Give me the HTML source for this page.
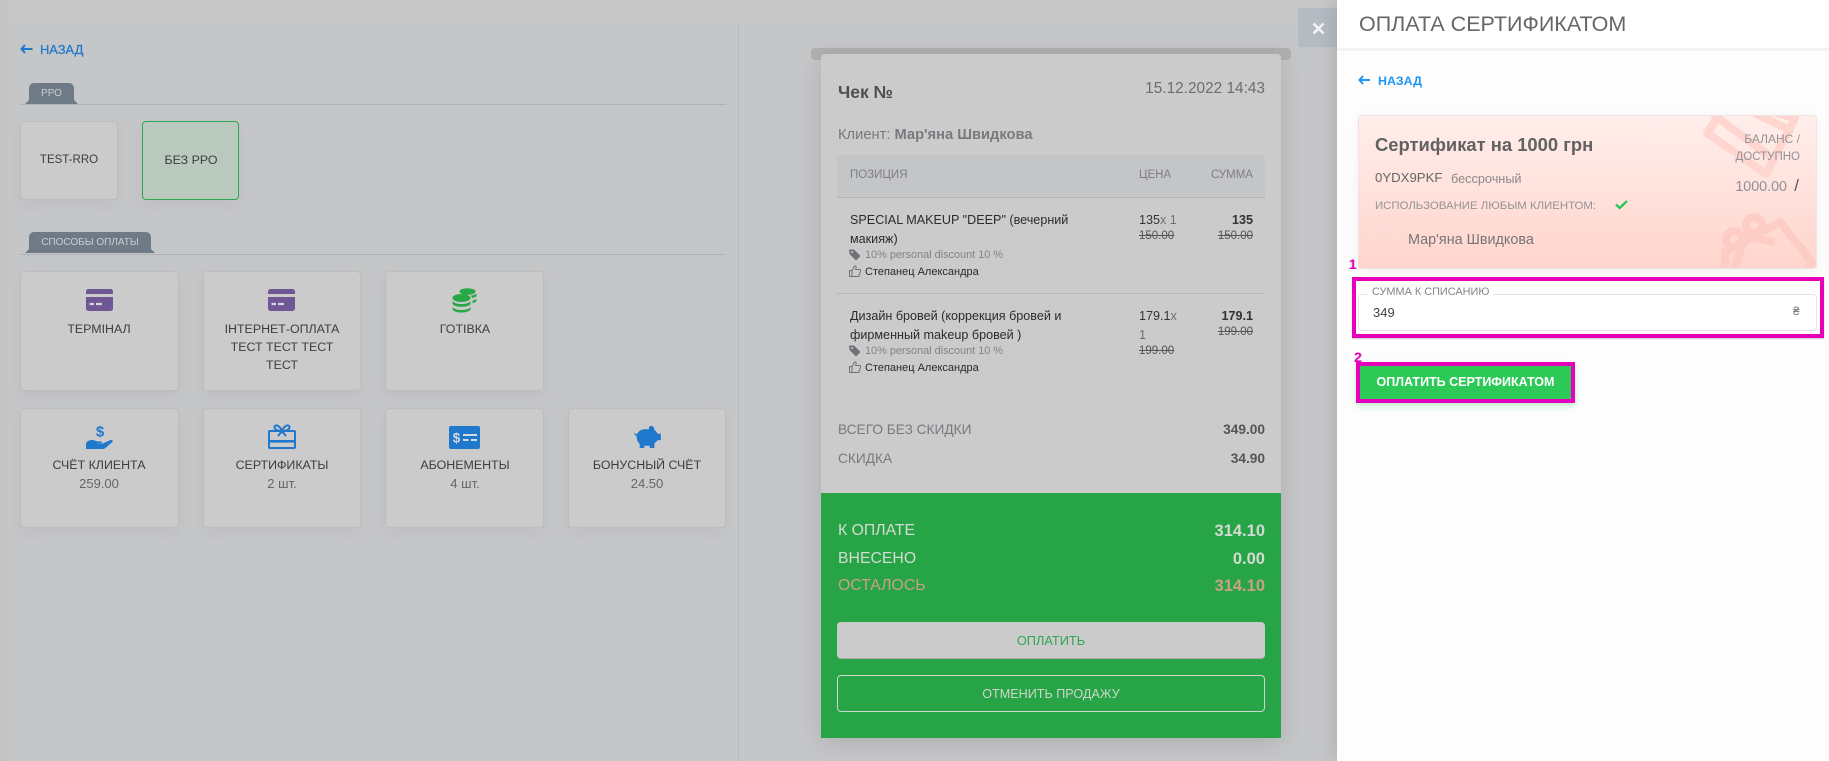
<!DOCTYPE html>
<html lang="ru"><head><meta charset="utf-8"><title>Оплата сертификатом</title>
<style>
*{box-sizing:border-box}
html,body{margin:0;padding:0}
body{width:1829px;height:761px;position:relative;overflow:hidden;background:#c7c7c7;font-family:"Liberation Sans",Arial,sans-serif;color:#333}
.a{position:absolute}
.t{position:absolute;white-space:nowrap;line-height:20px;height:20px}
.r{transform:translateX(-100%)}
.c{transform:translateX(-50%)}
.b{font-weight:bold}
.tab{position:absolute;background:#6e7b87;border-radius:5px 5px 0 0;color:#c9cdd1;font-size:10px;text-align:center;height:21px;line-height:22px}
.tab:before,.tab:after{content:"";position:absolute;bottom:0;width:5px;height:5px;background:#6e7b87}
.tab:before{left:-4px;clip-path:polygon(100% 0,100% 100%,0 100%)}
.tab:after{right:-4px;clip-path:polygon(0 0,100% 100%,0 100%)}
.card{position:absolute;background:#cbcbcb;border:1px solid #bcbdbe;border-radius:4px;box-shadow:0 5px 14px rgba(0,0,0,.04)}
.lb{font-size:12.4px;color:#3d3d3d}
.sub{font-size:13px;color:#666}
.hd{font-size:11.5px;color:#7d7f82}
.p{font-size:12.6px;color:#2c2c2c}
.d{font-size:10.9px;color:#80838a}
.s{font-size:11px;color:#2a2a2a}
.n{font-size:12.6px;color:#333}
.st,.st span{font-size:11.5px;color:#555;text-decoration:line-through}
.tot{font-size:13.7px;color:#76797e}
.g{font-size:15.8px;color:#d4dbd4}
.gb{font-size:16.5px}
</style></head><body>

<!-- page background -->
<div class="a" style="left:8px;top:24px;width:1340px;height:737px;background:#c5c6c8"></div>
<div class="a" style="left:0;top:0;width:8px;height:761px;background:#c3c3c3"></div>
<div class="a" style="left:738px;top:24px;width:1px;height:737px;background:#b9babc"></div>

<!-- left column -->
<svg class="a" style="left:20px;top:44px" width="13" height="10" viewBox="0 0 13 10"><path d="M5 1 1.500 5 5 9M2 5h10.500" fill="none" stroke="#1f78cc" stroke-width="2"/></svg>
<div class="t" style="left:40px;top:40px;font-size:12.900px;color:#1f78cc;-webkit-text-stroke:.25px #1f78cc">НАЗАД</div>

<div class="tab" style="left:29px;top:83px;width:45px">РРО</div>
<div class="a" style="left:20px;top:104px;width:706px;height:1px;background:#b0b2b5"></div>
<div class="card" style="left:20px;top:121px;width:98px;height:79px"></div>
<div class="t lb" style="left:69px;top:150px;font-size:11.500px"><span class="c" style="position:absolute">TEST-RRO</span></div>
<div class="card" style="left:142px;top:121px;width:97px;height:79px;background:#bac9bd;border-color:#32a552"></div>
<div class="t lb" style="left:191px;top:150px"><span class="c" style="position:absolute">БЕЗ РРО</span></div>

<div class="tab" style="left:29px;top:232px;width:122px">СПОСОБЫ ОПЛАТЫ</div>
<div class="a" style="left:20px;top:254px;width:706px;height:1px;background:#b0b2b5"></div>

<div class="card" style="left:20px;top:271px;width:159px;height:120px"></div>
<div class="card" style="left:203px;top:271px;width:158px;height:120px"></div>
<div class="card" style="left:385px;top:271px;width:159px;height:120px"></div>
<div class="card" style="left:20px;top:408px;width:159px;height:120px"></div>
<div class="card" style="left:203px;top:408px;width:158px;height:120px"></div>
<div class="card" style="left:385px;top:408px;width:159px;height:120px"></div>
<div class="card" style="left:568px;top:408px;width:158px;height:120px"></div>

<!-- credit card icons -->
<svg class="a" style="left:86px;top:289px" width="27" height="22" viewBox="0 0 27 22"><path d="M2.500 0h22A2.500 2.500 0 0 1 27 2.500V5H0V2.500A2.500 2.500 0 0 1 2.500 0ZM0 8h27v11.500a2.500 2.500 0 0 1-2.500 2.500h-22A2.500 2.500 0 0 1 0 19.500Z" fill="#6f5796"/><path d="M3.500 15h4.500M10 15h6" stroke="#d8d4df" stroke-width="2.200"/></svg>
<svg class="a" style="left:268px;top:289px" width="27" height="22" viewBox="0 0 27 22"><path d="M2.500 0h22A2.500 2.500 0 0 1 27 2.500V5H0V2.500A2.500 2.500 0 0 1 2.500 0ZM0 8h27v11.500a2.500 2.500 0 0 1-2.500 2.500h-22A2.500 2.500 0 0 1 0 19.500Z" fill="#6f5796"/><path d="M3.500 15h4.500M10 15h6" stroke="#d8d4df" stroke-width="2.200"/></svg>

<!-- coins -->
<svg class="a" style="left:452px;top:288px" width="26" height="25" viewBox="0 0 26 25"><g fill="#28a745"><ellipse cx="15.500" cy="3.500" rx="8" ry="3.300"/><path d="M19 7.500c2.500-.3 4.500-1 5.500-2v2.500c-.6 1-2.400 1.800-4.500 2.100ZM20.500 12.500c2-.3 3.300-1 4-2v2.500c-.7 1-2 1.700-4 2Z"/><ellipse cx="9.500" cy="10" rx="9" ry="4"/><path d="M.5 13c1.500 2 5 3 9 3s7.500-1 9-3v3c-1.500 2-5 2.800-9 2.800s-7.500-.8-9-2.800ZM.5 19c1.500 2 5 3 9 3s7.500-1 9-3v2.500c-1.500 2-5 3-9 3s-7.500-1-9-3Z"/></g></svg>

<!-- hand -->
<svg class="a" style="left:86px;top:424px" width="27" height="26" viewBox="0 0 27 26"><text x="14" y="12.500" text-anchor="middle" font-family="Liberation Sans" font-weight="bold" font-size="15" fill="#1f78cc">$</text><path d="M0 19c2-2.500 4-3 6-3 2.500 0 4 1.500 6.500 1.500h2.500c1.500 0 1.500 2-.5 2.200H10c2 .5 4.500.6 6.500-.2L24.500 16c1.500-.6 3 .8 1.800 2l-6.800 6c-1 .8-2 1-3.500 1H0Z" fill="#1f78cc"/></svg>

<!-- gift -->
<svg class="a" style="left:268px;top:424px" width="28" height="26" viewBox="0 0 28 26"><path d="M2 7h24a1 1 0 0 1 1 1v15a1 1 0 0 1-1 1H2a1 1 0 0 1-1-1V8a1 1 0 0 1 1-1Z" fill="none" stroke="#1f78cc" stroke-width="2"/><rect x="1" y="16" width="26" height="2.600" fill="#1f78cc"/><path d="M14 7C12 2 8.500.5 7 2S7 7 14 7C21 7 22.500 3.500 21 2S16 2 14 7ZM14 7l-4 5M14 7l4 5" fill="none" stroke="#1f78cc" stroke-width="2"/></svg>

<!-- abonement -->
<svg class="a" style="left:449px;top:426px" width="31" height="23" viewBox="0 0 31 23"><rect width="31" height="23" rx="2" fill="#1f78cc"/><text x="7.500" y="16.500" text-anchor="middle" font-family="Liberation Sans" font-weight="bold" font-size="13.500" fill="#d4dbe2">$</text><path d="M14 9h14M14 14h5.500M22 14h6" stroke="#d4dbe2" stroke-width="2"/></svg>

<!-- piggy -->
<svg class="a" style="left:634px;top:425px" width="27" height="23" viewBox="0 0 29 25"><path d="M18 1c3 0 4 2 4 4.500 1.600 1 2.800 2.400 3.500 4H29v7h-3.500c-.8 1.400-2 2.600-3.500 3.500V25h-5v-2.500h-6V25H6v-4.500C3.500 18.500 2.500 15.500 2.800 12 1 11.500 0 10 .5 8c.4 1.200 1.300 2 2.700 2C4.500 6.500 8 4.500 12.500 4.500c1.200 0 2.300.1 3.300.4C16 3 16.800 1 18 1Z" fill="#1f78cc"/></svg>

<div class="t lb" style="left:99px;top:319px"><span class="c" style="position:absolute">ТЕРМІНАЛ</span></div>
<div class="t lb" style="left:282px;top:319px"><span class="c" style="position:absolute">ІНТЕРНЕТ-ОПЛАТА</span></div>
<div class="t lb" style="left:282px;top:337px"><span class="c" style="position:absolute">ТЕСТ ТЕСТ ТЕСТ</span></div>
<div class="t lb" style="left:282px;top:355px"><span class="c" style="position:absolute">ТЕСТ</span></div>
<div class="t lb" style="left:465px;top:319px"><span class="c" style="position:absolute">ГОТІВКА</span></div>
<div class="t lb" style="left:99px;top:455px"><span class="c" style="position:absolute">СЧЁТ КЛИЕНТА</span></div>
<div class="t sub" style="left:99px;top:474px"><span class="c" style="position:absolute">259.00</span></div>
<div class="t lb" style="left:282px;top:455px"><span class="c" style="position:absolute">СЕРТИФИКАТЫ</span></div>
<div class="t sub" style="left:282px;top:474px"><span class="c" style="position:absolute">2 шт.</span></div>
<div class="t lb" style="left:465px;top:455px"><span class="c" style="position:absolute">АБОНЕМЕНТЫ</span></div>
<div class="t sub" style="left:465px;top:474px"><span class="c" style="position:absolute">4 шт.</span></div>
<div class="t lb" style="left:647px;top:455px"><span class="c" style="position:absolute">БОНУСНЫЙ СЧЁТ</span></div>
<div class="t sub" style="left:647px;top:474px"><span class="c" style="position:absolute">24.50</span></div>

<!-- receipt -->
<div class="a" style="left:811px;top:48px;width:480px;height:12px;background:#b0b0b0;border-radius:4px"></div>
<div class="a" style="left:821px;top:54px;width:460px;height:684px;background:#cbcbcb;border-radius:4px 4px 0 0;box-shadow:0 4px 24px rgba(0,0,0,.12)"></div>
<div class="a" style="left:821px;top:493px;width:460px;height:245px;background:#27a446"></div>

<div class="t b" style="left:838px;top:82px;font-size:17.500px;color:#4f4f4f">Чек №</div>
<div class="t" style="left:1265px;top:79px;font-size:15.400px;color:#6b6d70"><span class="r" style="position:absolute">15.12.2022 14:43</span></div>
<div class="t" style="left:838px;top:125px;font-size:14.700px;color:#777a7e">Клиент: <b>Мар'яна Швидкова</b></div>

<div class="a" style="left:837px;top:155px;width:428px;height:43px;background:#c4c5c7;border-bottom:1px solid #b4b6b8"></div>
<div class="t hd" style="left:850px;top:165px">ПОЗИЦИЯ</div>
<div class="t hd" style="left:1139px;top:165px">ЦЕНА</div>
<div class="t hd" style="left:1253px;top:165px"><span class="r" style="position:absolute">СУММА</span></div>

<div class="t p" style="left:850px;top:210px">SPECIAL MAKEUP "DEEP" (вечерний</div>
<div class="t p" style="left:850px;top:229px">макияж)</div>
<svg class="a" style="left:849px;top:249px" width="12" height="12" viewBox="0 0 12 12"><path d="M0 1.500A1 1 0 0 1 1 .5h4L11.500 7 7 11.500.5 5Z" fill="#6f7276"/><circle cx="3" cy="3" r="1" fill="#cbcbcb"/></svg>
<div class="t d" style="left:865px;top:245px">10% personal discount 10 %</div>
<svg class="a" style="left:849px;top:265px" width="12" height="12" viewBox="0 0 12 12"><path d="M.5 5.500h2.500v6H.5ZM3 5.500 5.500 1c1.200-.5 1.800.3 1.500 2L6.500 4.500h4c1 0 1.300.8 1 1.500l-1.200 4.500c-.3.700-.7 1-1.500 1H3" fill="none" stroke="#6f7276" stroke-width="1"/></svg>
<div class="t s" style="left:865px;top:262px">Степанец Александра</div>

<div class="t n" style="left:1139px;top:210px">135<span style="color:#6c6e71">x 1</span></div>
<div class="t st" style="left:1139px;top:226px">150.00</div>
<div class="t n b" style="left:1253px;top:210px"><span class="r" style="position:absolute">135</span></div>
<div class="t" style="left:1253px;top:226px"><span class="r st" style="position:absolute">150.00</span></div>

<div class="a" style="left:837px;top:293px;width:428px;height:1px;background:#b4b6b8"></div>

<div class="t p" style="left:850px;top:306px">Дизайн бровей (коррекция бровей и</div>
<div class="t p" style="left:850px;top:325px">фирменный makeup бровей )</div>
<svg class="a" style="left:849px;top:345px" width="12" height="12" viewBox="0 0 12 12"><path d="M0 1.500A1 1 0 0 1 1 .5h4L11.500 7 7 11.500.5 5Z" fill="#6f7276"/><circle cx="3" cy="3" r="1" fill="#cbcbcb"/></svg>
<div class="t d" style="left:865px;top:341px">10% personal discount 10 %</div>
<svg class="a" style="left:849px;top:361px" width="12" height="12" viewBox="0 0 12 12"><path d="M.5 5.500h2.500v6H.5ZM3 5.500 5.500 1c1.200-.5 1.800.3 1.500 2L6.500 4.500h4c1 0 1.300.8 1 1.500l-1.200 4.500c-.3.700-.7 1-1.500 1H3" fill="none" stroke="#6f7276" stroke-width="1"/></svg>
<div class="t s" style="left:865px;top:358px">Степанец Александра</div>

<div class="t n" style="left:1139px;top:306px">179.1<span style="color:#6c6e71">x</span></div>
<div class="t n" style="left:1139px;top:325px;color:#6c6e71">1</div>
<div class="t st" style="left:1139px;top:341px">199.00</div>
<div class="t n b" style="left:1253px;top:306px"><span class="r" style="position:absolute">179.1</span></div>
<div class="t" style="left:1253px;top:322px"><span class="r st" style="position:absolute">199.00</span></div>

<div class="t tot" style="left:838px;top:420px">ВСЕГО БЕЗ СКИДКИ</div>
<div class="t tot b" style="left:1265px;top:420px;color:#555"><span class="r" style="position:absolute">349.00</span></div>
<div class="t tot" style="left:838px;top:449px">СКИДКА</div>
<div class="t tot b" style="left:1265px;top:449px;color:#555"><span class="r" style="position:absolute">34.90</span></div>

<div class="t g" style="left:838px;top:521px">К ОПЛАТЕ</div>
<div class="t g gb b" style="left:1265px;top:521px"><span class="r" style="position:absolute">314.10</span></div>
<div class="t g" style="left:838px;top:549px">ВНЕСЕНО</div>
<div class="t g gb b" style="left:1265px;top:549px"><span class="r" style="position:absolute">0.00</span></div>
<div class="t g" style="left:838px;top:576px;color:#c9a088">ОСТАЛОСЬ</div>
<div class="t g gb b" style="left:1265px;top:576px;color:#c9a088"><span class="r" style="position:absolute">314.10</span></div>

<div class="a" style="left:837px;top:622px;width:428px;height:37px;background:#cbcbcb;border-radius:4px;border-bottom:1px solid #aaa;text-align:center;line-height:38px;font-size:12.800px;color:#2fa650">ОПЛАТИТЬ</div>
<div class="a" style="left:837px;top:675px;width:428px;height:37px;border:1px solid #cfd6cf;border-radius:4px;text-align:center;line-height:36px;font-size:12.600px;color:#cdd6cd">ОТМЕНИТЬ ПРОДАЖУ</div>

<!-- close button -->
<div class="a" style="left:1298px;top:8px;width:39px;height:39px;background:#b4bbc3;border-radius:3px 0 0 3px"></div>
<svg class="a" style="left:1312px;top:22px" width="13" height="13" viewBox="0 0 13 13"><path d="M1.500 1.500 11.500 11.500M11.500 1.500 1.500 11.500" stroke="#f4f4f4" stroke-width="2.600"/></svg>

<!-- right panel -->
<div class="a" style="left:1337px;top:0;width:492px;height:761px;background:#fdfdfd;box-shadow:-4px 0 16px rgba(0,0,0,.1)"></div>
<div class="a" style="left:1337px;top:0;width:492px;height:48px;background:#fff"></div>
<div class="a" style="left:1337px;top:48px;width:492px;height:3px;background:#f3f3f3"></div>
<div class="t" style="left:1359px;top:14px;font-size:21.500px;color:#646669">ОПЛАТА СЕРТИФИКАТОМ</div>

<svg class="a" style="left:1358px;top:75px" width="12" height="10" viewBox="0 0 12 10"><path d="M5 1 1.500 5 5 9M2 5h10" fill="none" stroke="#2196f3" stroke-width="2"/></svg>
<div class="t b" style="left:1378px;top:71px;font-size:12.400px;color:#2196f3">НАЗАД</div>

<!-- certificate card -->
<div class="a" style="left:1358px;top:115px;width:459px;height:154px;background:linear-gradient(#ffeeeb,#ffd5cd);border:1px solid #f0e2df;border-radius:4px;overflow:hidden;box-shadow:0 2px 12px rgba(0,0,0,.05)">
<svg class="a" style="left:0;top:0" width="459" height="154" viewBox="1359 116 459 154"><g fill="none" stroke="#ffd6cf" stroke-width="8" stroke-linejoin="round" stroke-linecap="round"><path d="M1707 133 1730 100 1795 118 1766 174Z"/><path d="M1744 108 1790 130M1714 115 1768 155"/></g><g fill="none" stroke="#fdcdc5" stroke-width="8" stroke-linejoin="round"><path d="M1725 275 1725 252 1780 222 1812 262 1800 285Z"/><circle cx="1734" cy="239" r="8"/><circle cx="1754" cy="225" r="8"/><path d="M1745 236 1775 242M1745 236 1735 268"/></g></svg>
</div>
<div class="t b" style="left:1375px;top:135px;font-size:18.400px;color:#626262">Сертификат на 1000 грн</div>
<div class="t" style="left:1375px;top:168px;font-size:13.200px;color:#666">0YDX9PKF</div>
<div class="t" style="left:1451px;top:169px;font-size:12.700px;color:#8a8a8a">бессрочный</div>
<div class="t" style="left:1375px;top:196px;font-size:11.400px;color:#949494">ИСПОЛЬЗОВАНИЕ ЛЮБЫМ КЛИЕНТОМ:</div>
<svg class="a" style="left:1615px;top:199px" width="13" height="11" viewBox="0 0 13 11"><path d="M1 5.500 4.700 9 12 2" fill="none" stroke="#2ac75a" stroke-width="2.400"/></svg>
<div class="a" style="left:1375px;top:227px;width:25px;height:25px;border:1px solid #f6e0dc;border-radius:50%"></div>
<div class="t" style="left:1408px;top:230px;font-size:14.400px;color:#767676">Мар'яна Швидкова</div>
<div class="t" style="left:1800px;top:129px;font-size:12px;color:#909297"><span class="r" style="position:absolute">БАЛАНС /</span></div>
<div class="t" style="left:1800px;top:147px;font-size:11.500px;color:#909297"><span class="r" style="position:absolute">ДОСТУПНО</span></div>
<div class="t" style="left:1787px;top:177px;font-size:14.300px;color:#8f9196"><span class="r" style="position:absolute">1000.00</span></div>
<div class="t" style="left:1799px;top:176px;font-size:17px;color:#5a5a5a"><span class="r" style="position:absolute">/</span></div>

<!-- amount input -->
<div class="a" style="left:1358px;top:294px;width:459px;height:37px;background:#fff;border:1px solid #e4e4e4;border-radius:4px"></div>
<div class="t" style="left:1368px;top:283px;font-size:10.900px;height:18px;line-height:18px;color:#858585;background:linear-gradient(#fdfdfd 55%,#fff 55%);padding:0 4px">СУММА К СПИСАНИЮ</div>
<div class="t" style="left:1373px;top:303px;font-size:13px;color:#444">349</div>
<div class="t" style="left:1793px;top:301px;font-size:12px;color:#777">₴</div>
<div class="a" style="left:1352px;top:277px;width:472px;height:61px;border:4px solid #e600bb;box-shadow:0 1px 1px rgba(0,0,0,.2)"></div>
<div class="t b" style="left:1349px;top:254px;font-size:14px;color:#e600bb;text-shadow:-1px 0 #ddd">1</div>

<!-- pay button -->
<div class="a" style="left:1356px;top:362px;width:219px;height:41px;background:#2dc957;border:4px solid #e600bb;color:#fff;font-size:12.500px;font-weight:bold;text-align:center;line-height:33px;box-shadow:0 3px 6px rgba(45,201,87,.3)">ОПЛАТИТЬ СЕРТИФИКАТОМ</div>
<div class="t b" style="left:1354px;top:347px;font-size:14px;color:#e600bb;text-shadow:1px 0 #ddd">2</div>

</body></html>
